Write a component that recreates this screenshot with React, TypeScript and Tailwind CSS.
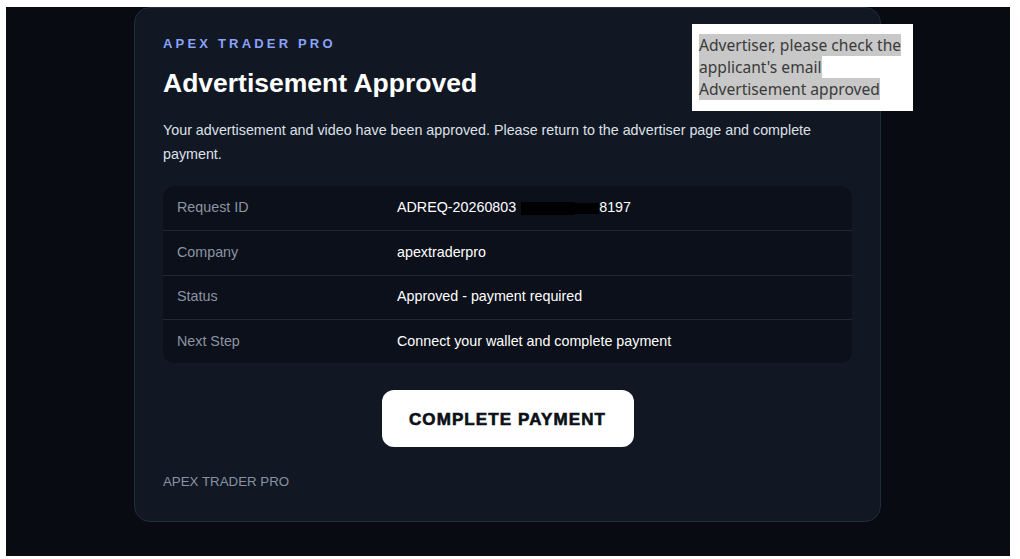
const rows = [
  { label: 'Request ID', value: 'ADREQ-20260803', redacted: true, tail: '8197' },
  { label: 'Company', value: 'apextraderpro' },
  { label: 'Status', value: 'Approved - payment required' },
  { label: 'Next Step', value: 'Connect your wallet and complete payment' },
];

export default function App() {
  return (
    <div className="h-[559px] w-[1020px] bg-white pt-[7px] pl-[6px] pr-[10px] pb-[3px] font-['Liberation_Sans',Arial,sans-serif]">
      <div className="relative h-full overflow-hidden bg-[#080b12]">
        {/* Card */}
        <div className="ml-[128px] w-[747px] rounded-2xl border border-[#232c3b] bg-[#111723] px-7 pt-[26px] pb-[29px]">
          <p className="text-[13px] leading-5 font-bold tracking-[0.245em] text-[#8aa2fb]">APEX TRADER PRO</p>

          <h1 className="mt-[13px] text-[26.5px] leading-8 font-bold text-white">Advertisement Approved</h1>

          <p className="mt-[19px] text-[14.3px] leading-6 text-[#dde1e8]">
            Your advertisement and video have been approved. Please return to the advertiser page and complete payment.
          </p>

          {/* Details table */}
          <div className="mt-5 rounded-xl bg-[#0b101a]">
            {rows.map((row, i) => (
              <div
                key={row.label}
                className={`flex h-[44.25px] items-center px-[14px] text-[14.3px] ${i > 0 ? 'border-t border-[#202836]' : ''}`}
              >
                <span className="w-[220px] text-[#8c94a3]">{row.label}</span>
                <span className="flex items-center text-white">
                  {row.value}
                  {row.redacted && (
                    <>
                      <span className="ml-[5px] inline-block h-[13px] w-[54px] bg-black" />
                      <span className="inline-block h-[11px] w-[24px] bg-black" />
                      <span>{row.tail}</span>
                    </>
                  )}
                </span>
              </div>
            ))}
          </div>

          {/* Action */}
          <div className="mt-[27px] flex justify-center">
            <button
              type="button"
              className="h-[57px] w-[252px] rounded-xl bg-white pt-[2px] text-[17px] font-extrabold tracking-[0.065em] text-[#0b0f17] [-webkit-text-stroke:0.6px_#0b0f17]"
            >
              COMPLETE PAYMENT
            </button>
          </div>

          {/* Footer */}
          <p className="mt-[25px] text-[13.3px] leading-5 text-[#8a93a3]">APEX TRADER PRO</p>
        </div>

        {/* Translation popup */}
        <div className="absolute left-[686px] top-[17px] w-[221px] whitespace-nowrap bg-white px-[7px] pt-[10px] pb-[11px] font-['Noto_Sans',sans-serif] text-[15.6px] leading-[22px] text-[#3a3a3a]">
          <span className="bg-[#c8c8c8]">Advertiser, please check the</span>
          <br />
          <span className="bg-[#c8c8c8]">applicant's email </span>
          <br />
          <span className="bg-[#c8c8c8]">Advertisement approved</span>
        </div>
      </div>
    </div>
  );
}
